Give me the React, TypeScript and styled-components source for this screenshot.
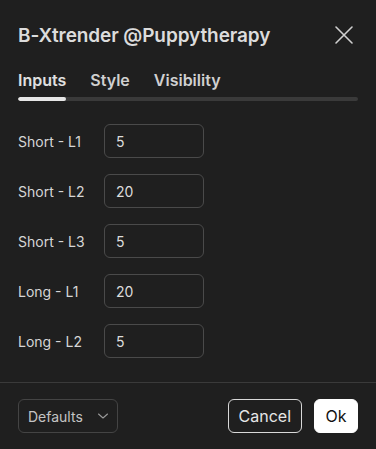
import styled, { createGlobalStyle } from 'styled-components'

const GlobalStyle = createGlobalStyle`
  html, body {
    margin: 0;
    padding: 0;
    background: #1f1f1f;
    font-family: Inter, "Noto Sans", sans-serif;
  }
`

const Dialog = styled.div`
  width: 376px;
  height: 449px;
  background: #1f1f1f;
  color: #dbdbdb;
  display: flex;
  flex-direction: column;
  box-sizing: border-box;
`

const Header = styled.div`
  display: flex;
  align-items: center;
  justify-content: space-between;
  padding: 22px 22px 0 18px;
  height: 26px;

  h1 {
    margin: 0;
    font-size: 19px;
    font-weight: 600;
    color: #dcdcdc;
    letter-spacing: -0.1px;
  }
`

const CloseButton = styled.button`
  background: none;
  border: none;
  padding: 0;
  width: 20px;
  height: 20px;
  cursor: pointer;
  display: flex;
`

const Tabs = styled.div`
  margin: 20px 18px 0;
`

const TabRow = styled.div`
  display: flex;
  gap: 24px;
  height: 24px;
  align-items: center;
`

const Tab = styled.span<{ $active?: boolean }>`
  font-size: 16px;
  font-weight: 600;
  color: ${p => (p.$active ? '#e0e0e0' : '#d0d0d0')};
`

const Track = styled.div`
  margin-top: 5px;
  height: 4px;
  border-radius: 2px;
  background: #3a3a3a;
  overflow: hidden;
`

const Indicator = styled.div`
  width: 48px;
  height: 100%;
  border-radius: 2px;
  background: #e6e6e6;
`

const Body = styled.div`
  flex: 1;
  display: flex;
  flex-direction: column;
  gap: 16px;
  padding: 23px 18px 0;
`

const Row = styled.div`
  display: flex;
  align-items: center;
  height: 34px;
`

const Label = styled.label`
  width: 86px;
  font-size: 14px;
  color: #d6d6d6;
`

const Input = styled.input`
  width: 100px;
  height: 34px;
  box-sizing: border-box;
  background: transparent;
  border: 1px solid #4a4a4a;
  border-radius: 6px;
  color: #dcdcdc;
  font-family: inherit;
  font-size: 14px;
  padding: 0 0 0 11px;
  outline: none;
`

const Footer = styled.div`
  border-top: 1px solid #3a3a3a;
  display: flex;
  align-items: center;
  justify-content: space-between;
  padding: 16px 18px 16px;
`

const Select = styled.div`
  width: 100px;
  height: 34px;
  box-sizing: border-box;
  border: 1px solid #444;
  border-radius: 6px;
  display: flex;
  align-items: center;
  justify-content: space-between;
  padding: 0 7px 0 9px;
  font-size: 14px;
  color: #c4c4c4;
`

const Actions = styled.div`
  display: flex;
  gap: 12px;
`

const Button = styled.button<{ $primary?: boolean }>`
  height: 34px;
  box-sizing: border-box;
  border-radius: 6px;
  font-family: inherit;
  font-size: 16px;
  padding: 0 10px;
  cursor: pointer;
  border: 1px solid ${p => (p.$primary ? '#ffffff' : '#d8d8d8')};
  background: ${p => (p.$primary ? '#ffffff' : 'transparent')};
  color: ${p => (p.$primary ? '#111' : '#e6e6e6')};
  min-width: ${p => (p.$primary ? '44px' : '74px')};
`

const fields = [
  { label: 'Short - L1', value: '5' },
  { label: 'Short - L2', value: '20' },
  { label: 'Short - L3', value: '5' },
  { label: 'Long - L1', value: '20' },
  { label: 'Long - L2', value: '5' },
]

export default function App() {
  return (
    <>
      <GlobalStyle />
      <Dialog>
        <Header>
          <h1>B-Xtrender @Puppytherapy</h1>
          <CloseButton aria-label="close">
            <svg width="20" height="20" viewBox="0 0 20 20">
              <path d="M2 2 L18 18 M18 2 L2 18" stroke="#d0d0d0" strokeWidth="1.6" strokeLinecap="round" />
            </svg>
          </CloseButton>
        </Header>
        <Tabs>
          <TabRow>
            <Tab $active>Inputs</Tab>
            <Tab>Style</Tab>
            <Tab>Visibility</Tab>
          </TabRow>
          <Track>
            <Indicator />
          </Track>
        </Tabs>
        <Body>
          {fields.map(f => (
            <Row key={f.label}>
              <Label>{f.label}</Label>
              <Input defaultValue={f.value} />
            </Row>
          ))}
        </Body>
        <Footer>
          <Select>
            <span>Defaults</span>
            <svg width="14" height="14" viewBox="0 0 14 14">
              <path d="M2.5 5 L7 9 L11.5 5" stroke="#9a9a9a" strokeWidth="1.1" fill="none" strokeLinecap="round" strokeLinejoin="round" />
            </svg>
          </Select>
          <Actions>
            <Button>Cancel</Button>
            <Button $primary>Ok</Button>
          </Actions>
        </Footer>
      </Dialog>
    </>
  )
}
